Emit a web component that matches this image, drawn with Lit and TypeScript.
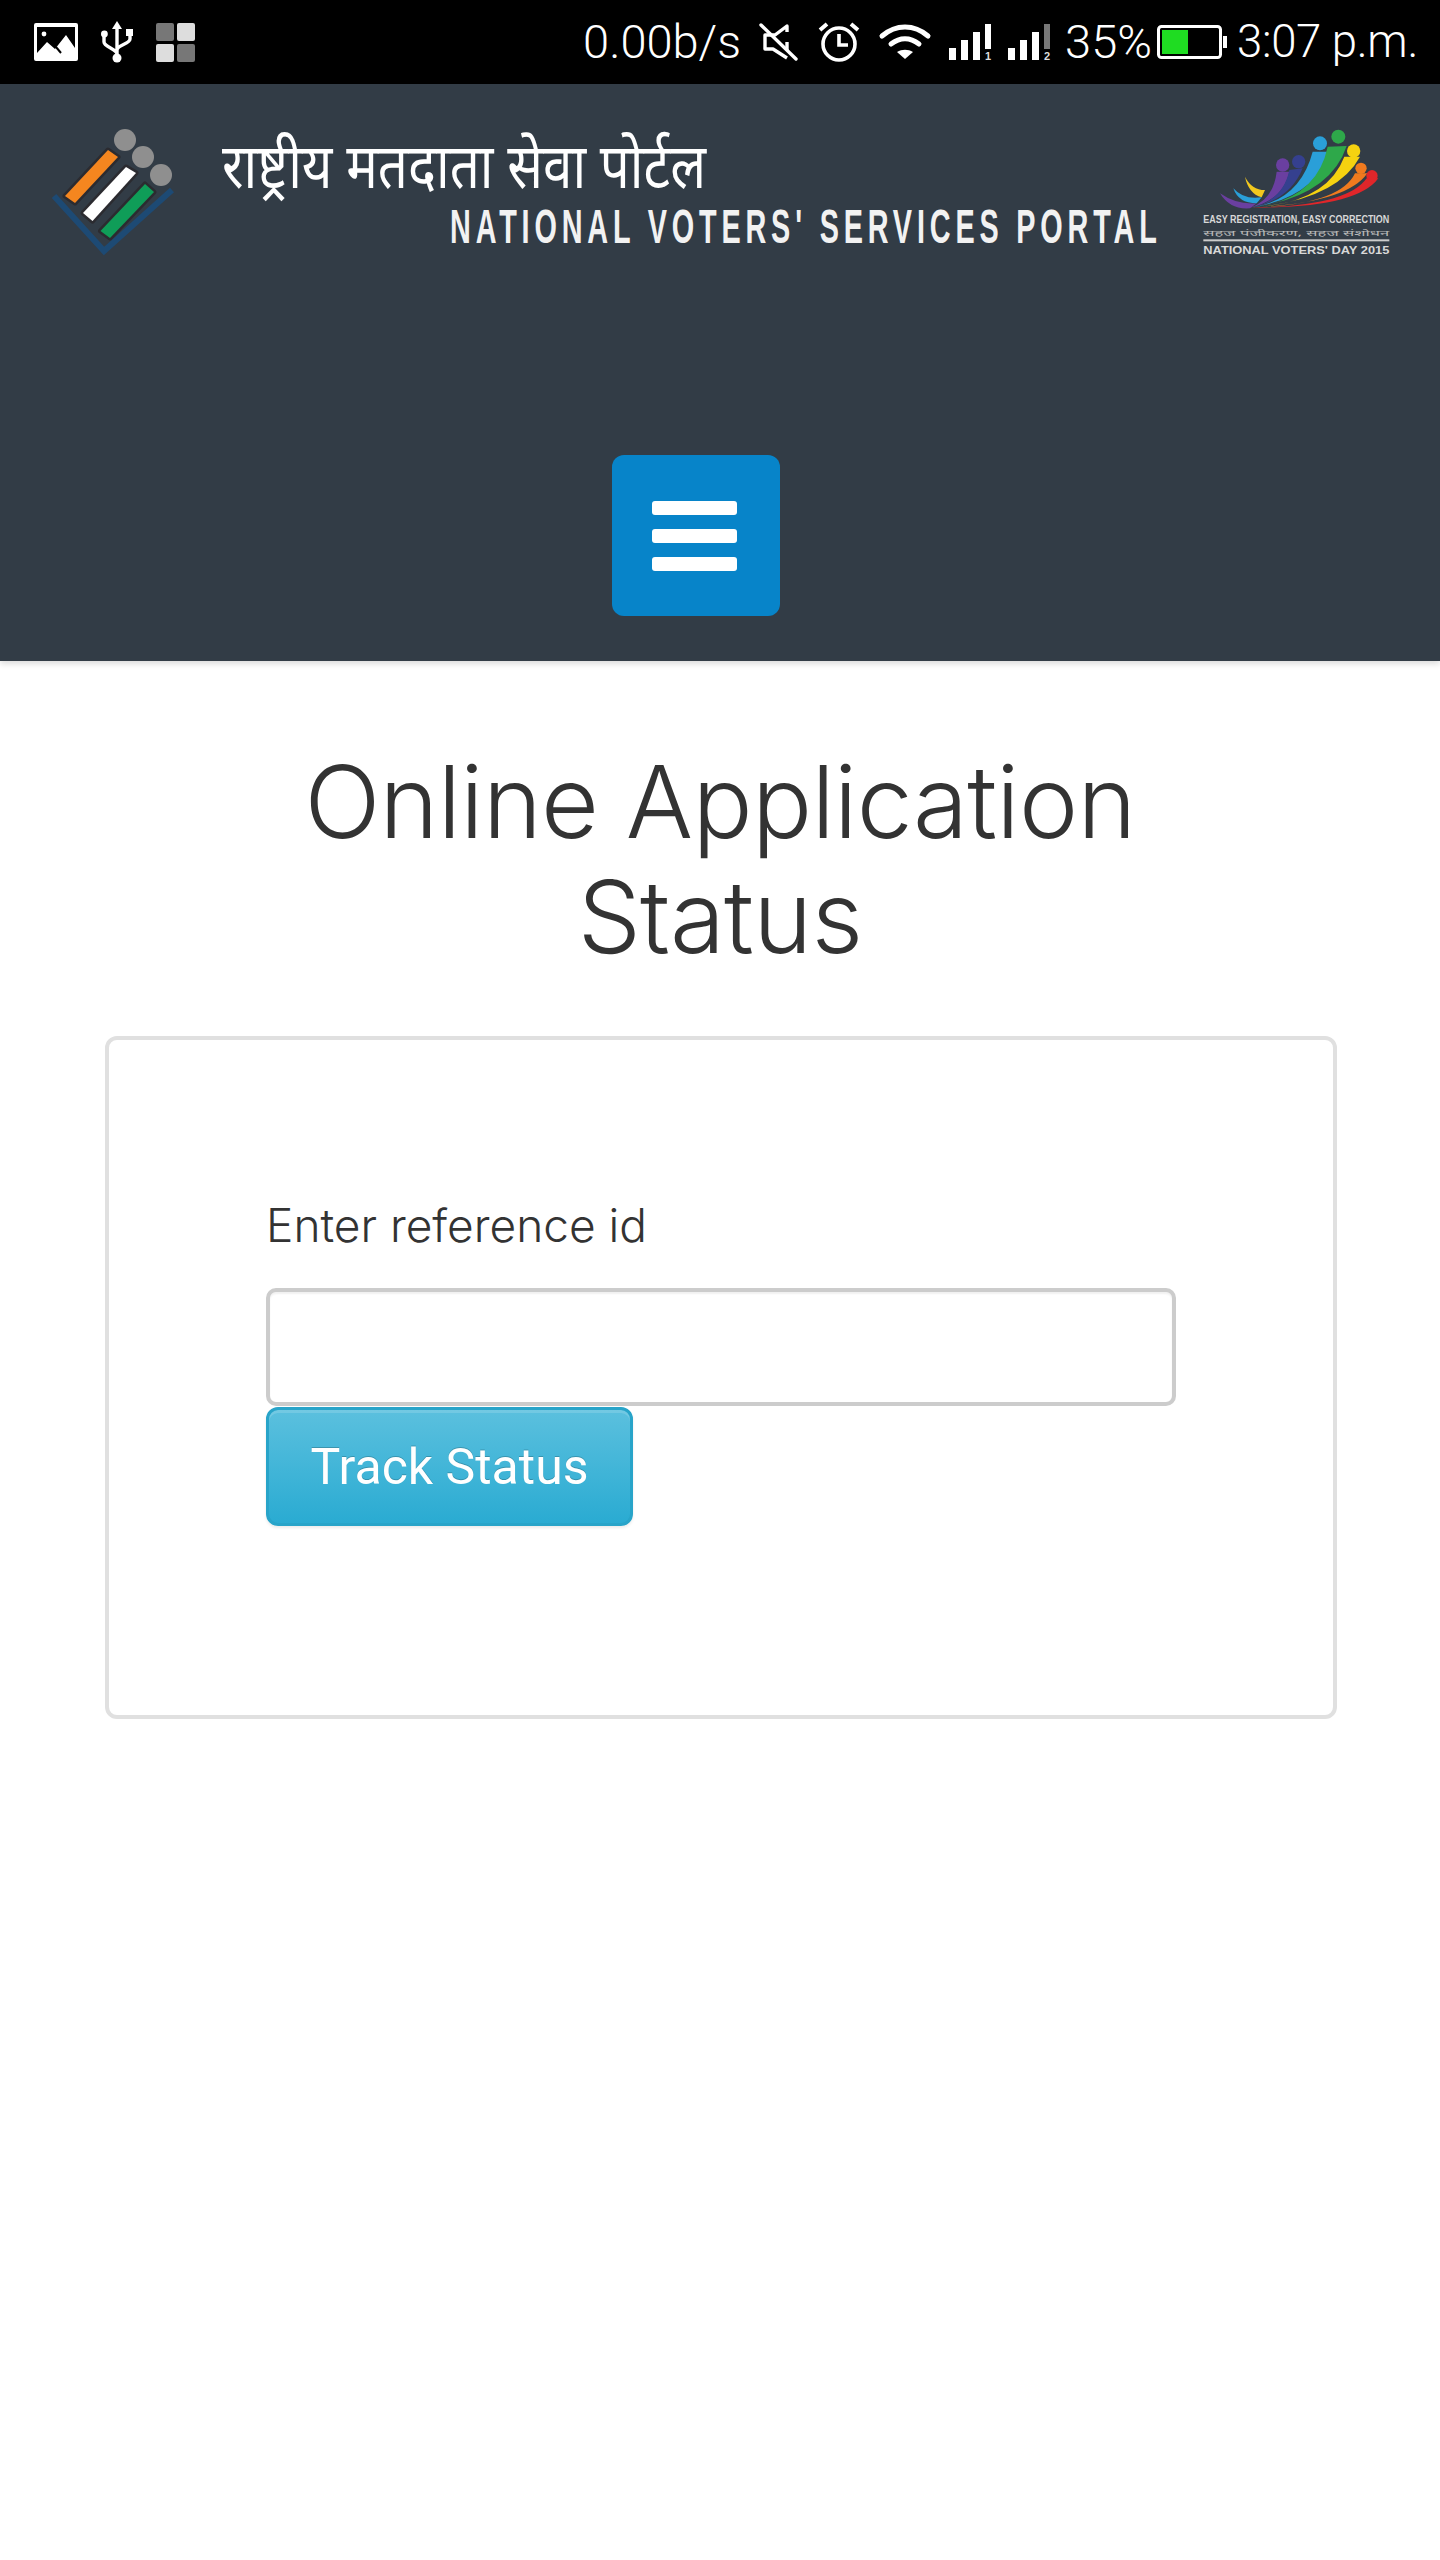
import { LitElement, html, css, svg } from "lit";
import { customElement } from "lit/decorators.js";

const devFont = `"Noto Sans Devanagari","Lohit Devanagari","Noto Sans","Liberation Sans",sans-serif`;

@customElement("app-root")
export class AppRoot extends LitElement {
  static styles = css`
    :host { display: block; width: 1440px; height: 2560px; background: #fff; font-family: Roboto, "Liberation Sans", sans-serif; overflow: hidden; }
    .status { height: 84px; background: #000; color: #fff; display: flex; align-items: center; justify-content: space-between; padding: 0 22px 0 34px; box-sizing: border-box; }
    .group { display: flex; align-items: center; }
    .status svg { display: block; flex: none; overflow: visible; }
    .st { font-size: 47px; font-weight: 300; line-height: 84px; white-space: nowrap; }
    .speed { margin-right: 19px; }
    .pct { margin: 0 5px 0 13px; }
    .time { margin-left: 10px; font-size: 45.5px; letter-spacing: -0.3px; }
    .m20 { margin-left: 20px; }
    .m23 { margin-left: 23px; }
    .m19 { margin-left: 19px; }
    .m15 { margin-left: 15px; }
    header { height: 577px; background: #323c46; box-shadow: 0 3px 6px rgba(0,0,0,.14); display: flex; flex-direction: column; }
    .logos { height: 160px; margin-top: 26px; padding: 0 20px 0 50px; display: flex; justify-content: space-between; align-items: flex-start; }
    .logos svg { display: block; flex: none; overflow: visible; }
    .menu { margin: 185px 0 0 612px; width: 168px; height: 161px; background: #0784c9; border: 0; border-radius: 12px; padding: 0 3px 0 0; display: flex; flex-direction: column; align-items: center; justify-content: center; gap: 14px; }
    .menu i { display: block; width: 85px; height: 14px; background: #fff; border-radius: 3px; }
    main { display: flex; flex-direction: column; align-items: center; }
    h1 { margin: 83px 0 0; font-family: Inter, Roboto, sans-serif; font-size: 100px; font-weight: 300; line-height: 115px; color: #333; text-align: center; width: 900px; letter-spacing: -0.7px; }
    .card { align-self: flex-start; margin: 62px 0 0 105px; width: 1232px; height: 683px; box-sizing: border-box; border: 4px solid #e0e0e0; border-radius: 12px; padding: 157px 0 0 157px; }
    label { display: block; font-family: Inter, Roboto, sans-serif; font-size: 46px; font-weight: 300; line-height: 56px; color: #333; }
    input { display: block; margin-top: 35px; width: 910px; height: 118px; box-sizing: border-box; border: 4px solid #ccc; border-radius: 10px; background: #fff; box-shadow: inset 0 2px 2px rgba(0,0,0,.06); outline: none; }
    .track { display: block; margin-top: 1px; width: 367px; height: 119px; box-sizing: border-box; border: 3px solid #28a4c9; border-radius: 12px; background: linear-gradient(#5bc0de, #2aabd2); color: #fff; font: 400 50px Roboto, sans-serif; text-shadow: 0 -1px 0 rgba(0,0,0,.2); padding: 0; box-shadow: inset 0 3px 0 rgba(255,255,255,.15), 0 2px 3px rgba(0,0,0,.08); }
  `;

  sig(second: boolean) {
    const tall = second ? "#777" : "#fff";
    return svg`<svg width="44" height="36" viewBox="0 0 44 36">
      <rect x="0" y="24" width="7" height="12" fill="#fff"/>
      <rect x="12" y="16" width="7" height="20" fill="#fff"/>
      <rect x="24" y="8" width="7" height="28" fill="#fff"/>
      <rect x="36" y="0" width="6" height="25" fill="${tall}"/>
      <text x="36" y="36" font-size="11" font-family="Liberation Sans" font-weight="700" fill="#ddd">${second ? "2" : "1"}</text>
    </svg>`;
  }

  leftLogo() {
    const bar = (p: string, c: string) => svg`
      <polygon points="${p}" fill="${c}" stroke="#2b2b30" stroke-width="5" stroke-linejoin="round" paint-order="stroke"/>`;
    return svg`<svg width="1110" height="160" viewBox="50 110 1110 160">
      <polyline points="54,196 104,251 172,190" fill="none" stroke="#1d4a74" stroke-width="6"/>
      ${bar("108,150 118,157 75,203 65,196", "#f5861f")}
      ${bar("126,167 136,173 92.5,221 83,213", "#fff")}
      ${bar("145,184 154,192 110,238 100.5,231", "#0f9d58")}
      <circle cx="125" cy="140" r="11" fill="#8f8f8f"/>
      <circle cx="143" cy="157" r="11" fill="#8f8f8f"/>
      <circle cx="161" cy="175" r="11" fill="#8f8f8f"/>
      <text transform="translate(222,188) scale(1,1.12)" font-size="56" fill="#fff" font-family=${devFont} textLength="484" lengthAdjust="spacingAndGlyphs">राष्ट्रीय मतदाता सेवा पोर्टल</text>
      <text transform="translate(450,243) scale(.6,1)" font-size="48" fill="#f2f2f2" font-weight="700" font-family="Liberation Sans, sans-serif" textLength="1178" lengthAdjust="spacing">NATIONAL VOTERS' SERVICES PORTAL</text>
    </svg>`;
  }

  rightLogo() {
    return svg`<svg width="260" height="160" viewBox="0 0 780 480">
      <path d="M180 250 Q230 285 290 280 L270 295 Q210 300 180 250Z" fill="#6a3fa0"/>
      <path d="M220 235 Q250 270 305 262 L290 280 Q235 280 220 235Z" fill="#2a9fd8"/>
      <path d="M255 200 Q275 240 315 240 L305 262 Q265 250 255 200Z" fill="#f2c81e"/>
      <path d="M270 293 Q340 270 350 185 L388 185 Q370 270 270 293Z" fill="#6a3fa0"/>
      <path d="M275 293 Q370 270 388 180 L428 175 Q390 270 275 293Z" fill="#35408f"/>
      <path d="M275 293 Q420 270 458 125 L505 125 Q470 260 275 293Z" fill="#2a9fd8"/>
      <path d="M275 293 Q470 270 503 110 L560 108 Q510 260 275 293Z" fill="#2ea84a"/>
      <path d="M275 293 Q500 280 553 140 L600 140 Q530 270 275 293Z" fill="#f5d210"/>
      <path d="M275 293 Q540 285 585 190 L622 190 Q560 280 275 293Z" fill="#f07a1e"/>
      <path d="M275 293 Q560 290 620 205 L655 205 Q590 295 275 293Z" fill="#e0262a"/>
      <circle cx="368" cy="165" r="20" fill="#6a3fa0"/><circle cx="416" cy="155" r="20" fill="#35408f"/>
      <circle cx="480" cy="100" r="21" fill="#2a9fd8"/><circle cx="535" cy="80" r="21" fill="#2ea84a"/>
      <circle cx="581" cy="123" r="20" fill="#f5d210"/><circle cx="603" cy="175" r="17" fill="#f07a1e"/>
      <circle cx="636" cy="197" r="17" fill="#e0262a"/>
      <text x="130" y="338" font-size="32" font-weight="700" fill="#d8d8d8" font-family="Liberation Sans, sans-serif" textLength="558" lengthAdjust="spacingAndGlyphs">EASY REGISTRATION, EASY CORRECTION</text>
      <text x="130" y="378" font-size="24" fill="#b8b8b8" font-family=${devFont} textLength="558" lengthAdjust="spacingAndGlyphs">सहज पंजीकरण, सहज संशोधन</text>
      <rect x="130" y="388" width="558" height="6" fill="#ccc"/>
      <text x="130" y="432" font-size="32" font-weight="700" fill="#d8d8d8" font-family="Liberation Sans, sans-serif" textLength="558" lengthAdjust="spacingAndGlyphs">NATIONAL VOTERS' DAY 2015</text>
    </svg>`;
  }

  render() {
    return html`
      <div class="status">
        <div class="group">
          <svg width="44" height="38" viewBox="0 0 44 38">
            <path fill="#fff" fill-rule="evenodd" d="M2 0h40a2 2 0 0 1 2 2v34a2 2 0 0 1-2 2H2a2 2 0 0 1-2-2V2a2 2 0 0 1 2-2zM3 4v26l10-11 8 7 11-14 9 13V4z"/>
            <circle cx="10" cy="11" r="2.4" fill="#fff"/>
            <path d="M27 30l-5-6" stroke="#000" stroke-width="2"/>
          </svg>
          <svg class="m23" width="32" height="42" viewBox="0 0 32 42" fill="none" stroke="#fff" stroke-width="3.4">
            <path d="M16 6v30M3 15v6c0 5 13 7 13 12M29 13v5c0 5-13 6-13 11"/>
            <path d="M16 0l5 8H11z" fill="#fff" stroke="none"/>
            <circle cx="16" cy="37" r="4.5" fill="#fff" stroke="none"/>
            <circle cx="3.4" cy="13" r="3.4" fill="#fff" stroke="none"/>
            <rect x="25" y="8" width="7" height="7" fill="#fff" stroke="none"/>
          </svg>
          <svg class="m23" width="39" height="39" viewBox="0 0 39 39">
            <rect x="0" y="0" width="18" height="18" rx="2" fill="#777"/>
            <rect x="21" y="0" width="18" height="18" rx="2" fill="#ddd"/>
            <rect x="0" y="21" width="18" height="18" rx="2" fill="#ddd"/>
            <rect x="21" y="21" width="18" height="18" rx="2" fill="#777"/>
          </svg>
        </div>
        <div class="group">
          <span class="st speed">0.00b/s</span>
          <svg width="38" height="36" viewBox="0 0 38 36" fill="none" stroke="#fff" stroke-width="3.4">
            <path d="M27 8V2L15 11H5v14h8l14 9" stroke-linejoin="round"/>
            <path d="M1 1l35 34" stroke-linecap="round"/>
            <path d="M27 18v8"/>
          </svg>
          <svg class="m20" width="42" height="40" viewBox="0 0 42 40" fill="none" stroke="#fff" stroke-width="3.6">
            <circle cx="21" cy="22" r="16"/>
            <path d="M21 12v11h9"/>
            <path d="M2 8l7-6M40 8l-7-6" stroke-width="4"/>
          </svg>
          <svg class="m20" width="50" height="34" viewBox="0 0 50 34">
            <path fill="none" stroke="#fff" stroke-width="5" stroke-linecap="round" d="M2 11C16-1 34-1 48 11M11 19c9-7 19-7 28 0"/>
            <path fill="#fff" d="M25 34l-8-7c5-3 11-3 16 0z"/>
          </svg>
          <div class="m19">${this.sig(false)}</div>
          <div class="m15">${this.sig(true)}</div>
          <span class="st pct">35%</span>
          <svg width="70" height="34" viewBox="0 0 70 34">
            <rect x="1.5" y="1.5" width="62" height="31" rx="3" fill="none" stroke="#fff" stroke-width="3"/>
            <rect x="66" y="11" width="4" height="12" fill="#fff"/>
            <rect x="5" y="5" width="26" height="24" fill="#1fdc22"/>
          </svg>
          <span class="st time">3:07 p.m.</span>
        </div>
      </div>
      <header>
        <div class="logos">${this.leftLogo()}${this.rightLogo()}</div>
        <button class="menu" aria-label="Menu"><i></i><i></i><i></i></button>
      </header>
      <main>
        <h1>Online Application Status</h1>
        <div class="card">
          <label for="ref">Enter reference id</label>
          <input id="ref" type="text" />
          <button class="track">Track Status</button>
        </div>
      </main>
    `;
  }
}
